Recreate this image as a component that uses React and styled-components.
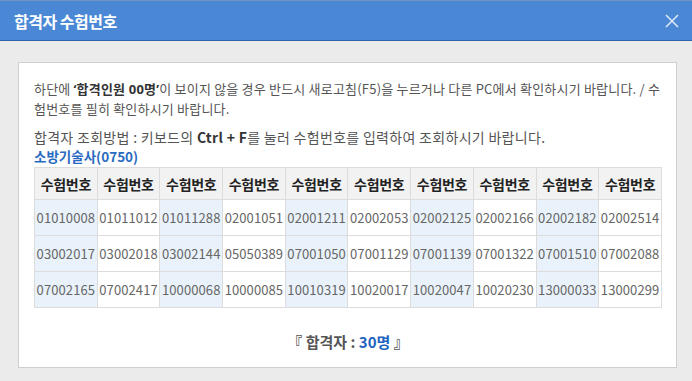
import React from "react";
import styled, { createGlobalStyle } from "styled-components";

const numbers = [
  "01010008", "01011012", "01011288", "02001051", "02001211",
  "02002053", "02002125", "02002166", "02002182", "02002514",
  "03002017", "03002018", "03002144", "05050389", "07001050",
  "07001129", "07001139", "07001322", "07001510", "07002088",
  "07002165", "07002417", "10000068", "10000085", "10010319",
  "10020017", "10020047", "10020230", "13000033", "13000299",
];

// 10 columns per row
const rows = [0, 1, 2].map((r) => numbers.slice(r * 10, r * 10 + 10));

function App() {
  return (
    <>
      <GlobalStyle />
      <Dialog>
        <Header>
          <Title>합격자 수험번호</Title>
          <CloseButton aria-label="닫기">
            <svg width="14" height="14" viewBox="0 0 14 14">
              <path d="M1 1L13 13M13 1L1 13" stroke="#dfeaf8" strokeWidth="1.5" />
            </svg>
          </CloseButton>
        </Header>
        <Body>
          <Box>
            <Notice>
              하단에 <strong>‘합격인원 00명’</strong>이 보이지 않을 경우 반드시 새로고침(F5)을 누르거나 다른 PC에서 확인하시기 바랍니다. / 수험번호를 필히 확인하시기 바랍니다.
            </Notice>
            <Guide>
              합격자 조회방법 : 키보드의 <strong>Ctrl + F</strong>를 눌러 수험번호를 입력하여 조회하시기 바랍니다.
            </Guide>
            <Category>소방기술사(0750)</Category>
            <Table>
              <thead>
                <tr>
                  {Array.from({ length: 10 }).map((_, i) => (
                    <Th key={i}>수험번호</Th>
                  ))}
                </tr>
              </thead>
              <tbody>
                {rows.map((row, r) => (
                  <tr key={r}>
                    {row.map((num, i) => (
                      <Td key={num} $shade={i % 2 === 0}>
                        {num}
                      </Td>
                    ))}
                  </tr>
                ))}
              </tbody>
            </Table>
            <Total>
              『 합격자 : <em>30명</em> 』
            </Total>
          </Box>
        </Body>
      </Dialog>
    </>
  );
}

const GlobalStyle = createGlobalStyle`
  html, body {
    margin: 0;
    padding: 0;
    background: #ebebeb;
  }
  body {
    font-family: "Noto Sans CJK KR", "Noto Sans", sans-serif;
  }
`;

const Dialog = styled.div`
  width: 692px;
  height: 381px;
  background: #ebebeb;
`;

const Header = styled.header`
  height: 41px;
  box-sizing: border-box;
  border-top: 1px solid #6f95c4;
  border-bottom: 1px solid #2f63b0;
  background: #4a88d6;
  display: flex;
  align-items: center;
  justify-content: space-between;
  padding: 0 13px 0 14px;
`;

const Title = styled.h1`
  margin: 0;
  color: #fff;
  font-size: 16px;
  font-weight: 700;
  letter-spacing: -0.5px;
`;

const CloseButton = styled.button`
  border: 0;
  background: none;
  padding: 0;
  display: flex;
  cursor: pointer;
`;

const Body = styled.div`
  padding: 21px 15px 0 18px;
`;

const Box = styled.div`
  width: 659px;
  height: 306px;
  box-sizing: border-box;
  background: #fff;
  border: 1px solid #cfcfcf;
  padding: 16px 14px 0 15px;
  color: #555;
`;

const Notice = styled.p`
  margin: 0;
  font-size: 13px;
  line-height: 20px;
  letter-spacing: 0.2px;

  strong {
    color: #333;
    font-family: "Noto Sans", "Noto Sans CJK KR", sans-serif;
  }
`;

const Guide = styled.p`
  margin: 8px 0 0;
  font-size: 14px;
  line-height: 20px;
  letter-spacing: 0.3px;

  strong {
    color: #333;
  }
`;

const Category = styled.h2`
  margin: 0;
  font-size: 13.5px;
  line-height: 19px;
  font-weight: 700;
  color: #2a6bc2;
`;

const Table = styled.table`
  width: 100%;
  margin-top: 1px;
  border-collapse: collapse;
  table-layout: fixed;
`;

const Th = styled.th`
  height: 31px;
  padding: 0;
  background: #f2f2f2;
  border: 1px solid #dcdcdc;
  color: #222;
  font-size: 14px;
  font-weight: 700;
  letter-spacing: -0.3px;
`;

const Td = styled.td`
  height: 35px;
  padding: 0;
  text-align: center;
  background: ${(p) => (p.$shade ? "#e9f2fb" : "#fff")};
  border: 1px solid #dcdcdc;
  color: #666;
  font-size: 13px;
  letter-spacing: 0.1px;
`;

const Total = styled.p`
  margin: 23px 0 0;
  text-align: center;
  font-size: 15px;
  font-weight: 700;
  color: #555;

  em {
    font-style: normal;
    color: #1e63c0;
  }
`;

export default App;
